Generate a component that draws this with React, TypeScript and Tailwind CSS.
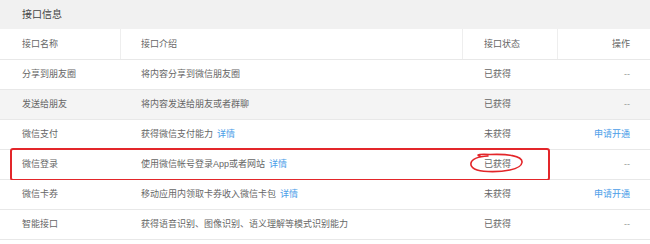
import type { ReactNode } from 'react'

type Row = {
  name: string
  desc: string
  link?: boolean
  got: boolean
  shaded?: boolean
  marked?: boolean
}

const rows: Row[] = [
  { name: '分享到朋友圈', desc: '将内容分享到微信朋友圈', got: true },
  { name: '发送给朋友', desc: '将内容发送给朋友或者群聊', got: true, shaded: true },
  { name: '微信支付', desc: '获得微信支付能力', link: true, got: false },
  { name: '微信登录', desc: '使用微信帐号登录App或者网站', link: true, got: true, marked: true },
  { name: '微信卡券', desc: '移动应用内领取卡券收入微信卡包', link: true, got: false },
  { name: '智能接口', desc: '获得语音识别、图像识别、语义理解等模式识别能力', got: true },
]

const cols = 'grid grid-cols-[121px_342px_95px_1fr]'

function Cell({ children, className = '' }: { children: ReactNode; className?: string }) {
  return <div className={`flex items-center ${className}`}>{children}</div>
}

export default function App() {
  return (
    <div
      className="h-[244px] w-[650px] bg-white text-[9px] leading-none text-[#666]"
      style={{ fontFamily: '"Liberation Sans", "Noto Sans CJK SC", sans-serif' }}
    >
      <div className="flex h-[29px] items-center bg-[#f1f1f1] pl-[22px] text-[10px] text-[#444]">接口信息</div>

      <div className={`${cols} h-[31px] border-b border-[#e8e8e8]`}>
        <Cell className="border-r border-[#eeeeee] pl-[22px]">接口名称</Cell>
        <Cell className="border-r border-[#eeeeee] pl-[20px]">接口介绍</Cell>
        <Cell className="border-r border-[#eeeeee] pl-[21px]">接口状态</Cell>
        <Cell className="justify-end pr-[20px]">操作</Cell>
      </div>

      {rows.map((row) => (
        <div
          key={row.name}
          className={`${cols} relative h-[30px] border-b border-[#e8e8e8] ${row.shaded ? 'bg-[#f4f4f4]' : 'bg-white'}`}
        >
          <Cell className="pl-[22px]">{row.name}</Cell>
          <Cell className="pl-[20px]">
            {row.desc}
            {row.link && <span className="ml-[4px] text-[#4a9de8]">详情</span>}
          </Cell>
          <Cell className="pl-[21px]">{row.got ? '已获得' : '未获得'}</Cell>
          <Cell className="justify-end pr-[20px]">
            {row.got ? <span className="text-[#999]">--</span> : <span className="text-[#4a9de8]">申请开通</span>}
          </Cell>

          {row.marked && (
            <>
              <div className="pointer-events-none absolute left-[10px] top-[-2px] h-[33px] w-[540px] rounded-[3px] border-2 border-[#e3262a]" />
              <svg
                className="pointer-events-none absolute left-[468px] top-[3px]"
                width="58"
                height="20"
                viewBox="0 0 58 20"
                fill="none"
              >
                <path
                  d="M12 3 C 6 1.5, 14 0.8, 22 1.5 C 38 0.8, 55 2.5, 54 9.5 C 53 17, 34 19, 20 18.5 C 8 18, 2 15, 3 10 C 4 5.5, 12 3.5, 20 3"
                  stroke="#e3262a"
                  strokeWidth="1.6"
                  strokeLinecap="round"
                />
              </svg>
            </>
          )}
        </div>
      ))}
    </div>
  )
}
